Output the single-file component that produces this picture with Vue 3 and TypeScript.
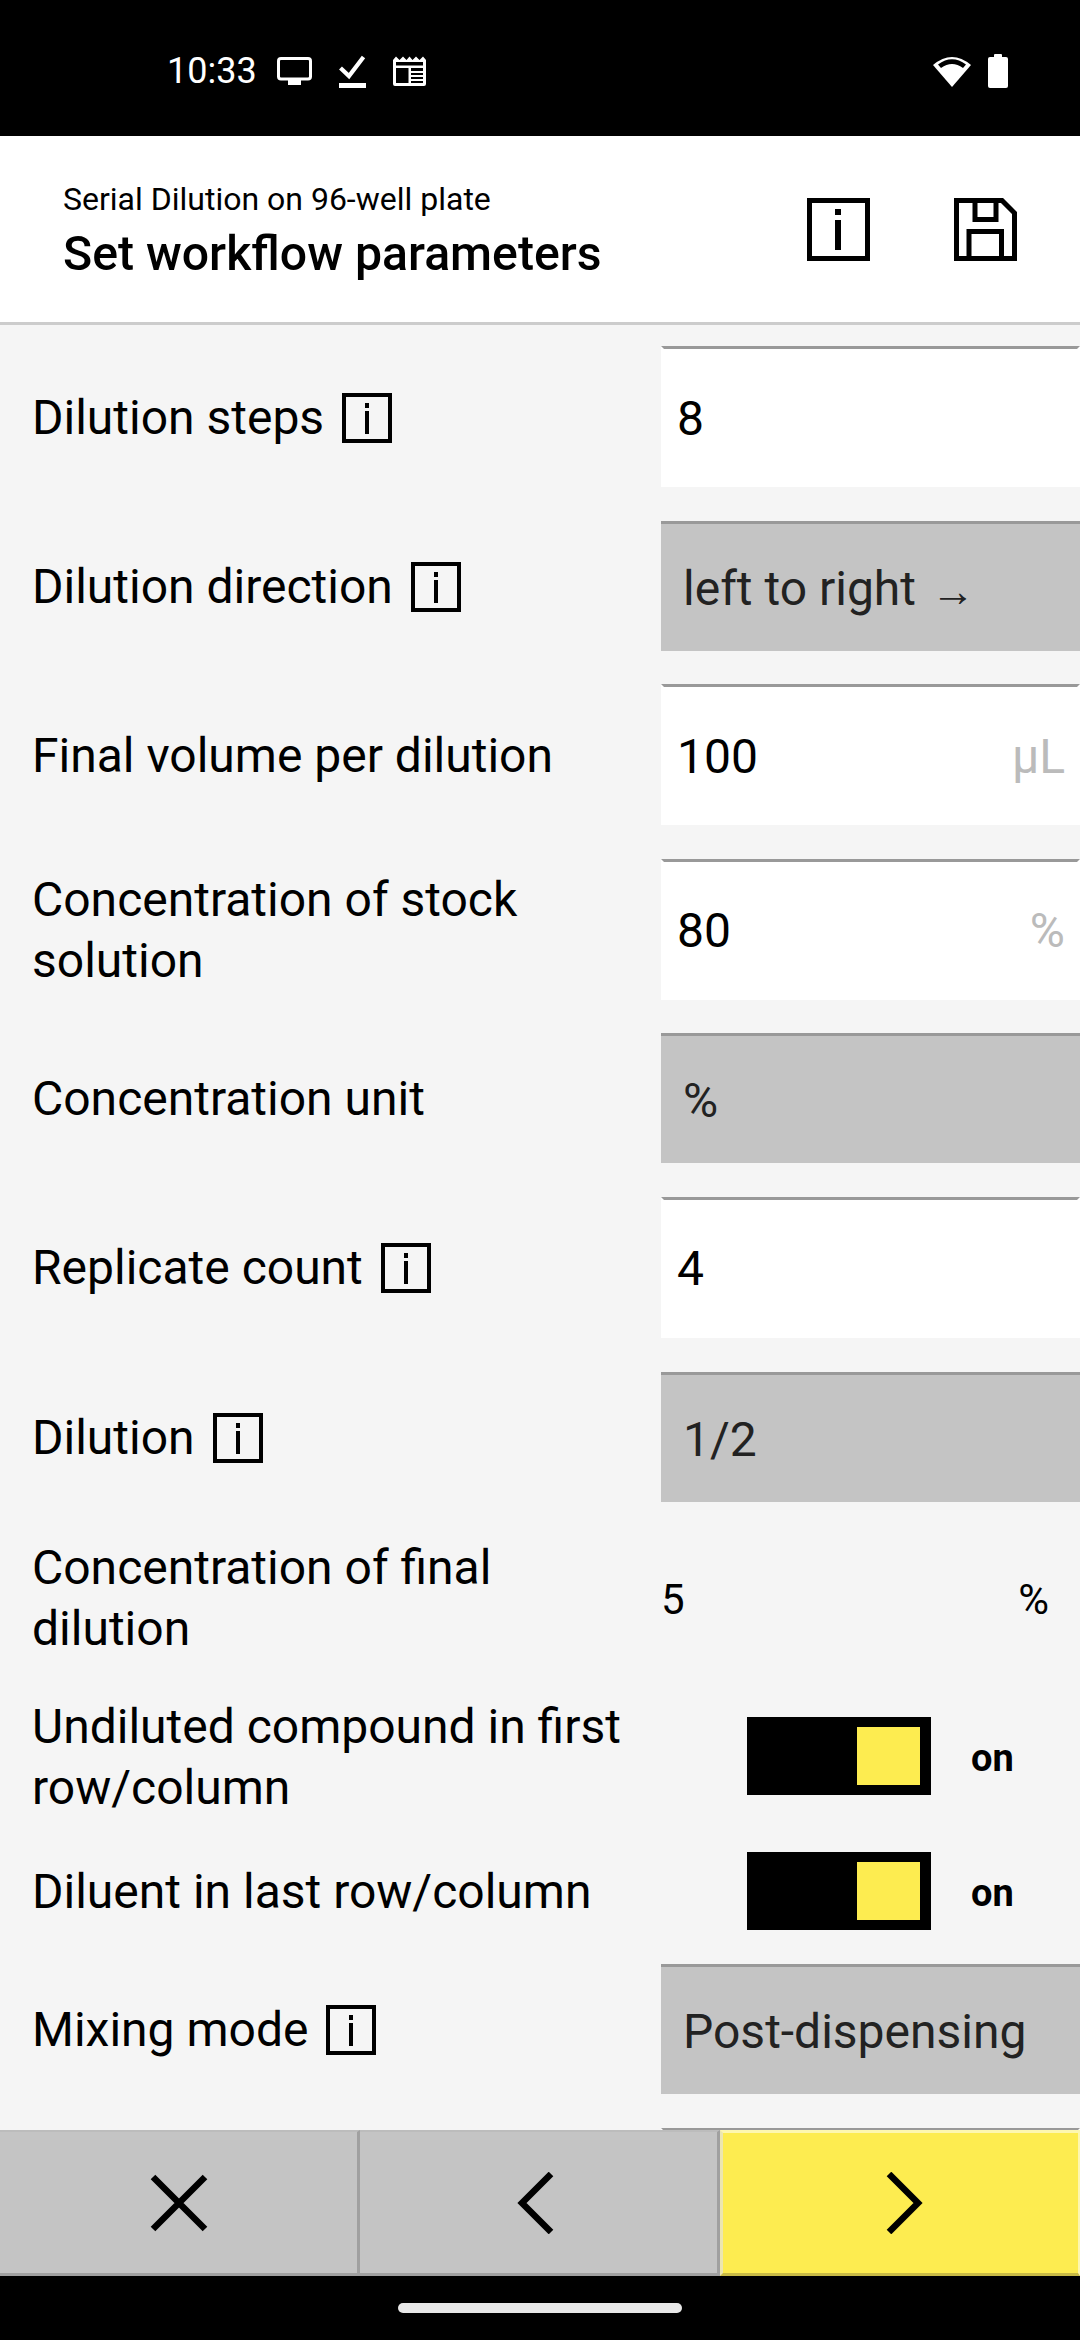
<script setup lang="ts">
type Row =
  | { kind: 'input'; label: string; info?: boolean; value: string; unit?: string }
  | { kind: 'select'; label: string; info?: boolean; value: string; arrow?: boolean }
  | { kind: 'text'; label: string; value: string; unit: string }
  | { kind: 'toggle'; label: string; tall?: boolean }

const rows: Row[] = [
  { kind: 'input', label: 'Dilution steps', info: true, value: '8' },
  { kind: 'select', label: 'Dilution direction', info: true, value: 'left to right', arrow: true },
  { kind: 'input', label: 'Final volume per dilution', value: '100', unit: 'µL' },
  { kind: 'input', label: 'Concentration of stock solution', value: '80', unit: '%' },
  { kind: 'select', label: 'Concentration unit', value: '%' },
  { kind: 'input', label: 'Replicate count', info: true, value: '4' },
  { kind: 'select', label: 'Dilution', info: true, value: '1/2' },
  { kind: 'text', label: 'Concentration of final dilution', value: '5', unit: '%' },
  { kind: 'toggle', label: 'Undiluted compound in first row/column', tall: true },
  { kind: 'toggle', label: 'Diluent in last row/column' },
  { kind: 'select', label: 'Mixing mode', info: true, value: 'Post-dispensing' },
  { kind: 'input', label: '', value: '' }
]

function isTall(row: Row): boolean {
  return row.kind === 'text' || (row.kind === 'toggle' && !!row.tall)
}
</script>

<template>
  <div class="screen">
    <div class="statusbar">
      <div class="status-left">
        <span class="time">10:33</span>
        <svg class="s-icon" width="35" height="28" viewBox="0 0 35 28">
          <rect x="1.5" y="1.5" width="32" height="20.5" rx="2.5" fill="none" stroke="#fff" stroke-width="3" />
          <rect x="11" y="23" width="13" height="5" fill="#fff" />
        </svg>
        <svg class="s-icon" width="27" height="33" viewBox="0 0 27 33">
          <path d="M1.5 13 L10 21 L24.5 2" fill="none" stroke="#fff" stroke-width="4.2" />
          <rect x="0" y="28" width="27" height="5" fill="#fff" />
        </svg>
        <svg class="s-icon" width="33" height="30" viewBox="0 0 33 30">
          <path d="M0 4 L3 0.5 L6.5 4 L10 0.5 L13.5 4 L16.5 0.5 L19.5 4 L23 0.5 L26.5 4 L30 0.5 L33 4 V28 Q33 30 31 30 H2 Q0 30 0 28 Z" fill="#fff" />
          <rect x="3" y="6" width="27" height="3.5" fill="#000" />
          <rect x="3" y="12" width="12.5" height="15" fill="#000" />
          <rect x="18" y="12" width="12" height="15" fill="#000" />
          <path d="M18 16 H30 M18 20 H30 M18 24 H30" stroke="#fff" stroke-width="2" />
        </svg>
      </div>
      <div class="status-right">
        <svg class="wifi" width="40" height="34" viewBox="0 0 40 34">
          <path d="M20 33 L1 11 Q20 -5 39 11 Z" fill="#fff" />
          <path d="M6 10.5 Q20 0 34 10.5 L31 14 Q20 6 9 14 Z" fill="#000" />
        </svg>
        <svg class="batt" width="20" height="34" viewBox="0 0 20 34">
          <rect x="6" y="0" width="8" height="4" rx="1" fill="#fff" />
          <rect x="0" y="3" width="20" height="31" rx="2" fill="#fff" />
        </svg>
      </div>
    </div>

    <header class="header">
      <div class="titles">
        <div class="subtitle">Serial Dilution on 96-well plate</div>
        <div class="title">Set workflow parameters</div>
      </div>
      <div class="actions">
        <svg width="63" height="63" viewBox="0 0 63 63">
          <rect x="2.5" y="2.5" width="58" height="58" fill="none" stroke="#000" stroke-width="5" />
          <rect x="28" y="11" width="6" height="6" fill="#000" />
          <rect x="28" y="22" width="6" height="30" fill="#000" />
        </svg>
        <svg width="63" height="63" viewBox="0 0 63 63">
          <path d="M2.5 2.5 H48 L60.5 15 V60.5 H2.5 Z" fill="none" stroke="#000" stroke-width="5" />
          <path d="M21 4 V21.5 H42 V4" fill="none" stroke="#000" stroke-width="5" />
          <path d="M15 60 V33.5 H47.5 V60" fill="none" stroke="#000" stroke-width="5" />
        </svg>
      </div>
    </header>

    <main class="content">
      <div v-for="(row, i) in rows" :key="i" class="row" :class="{ tall: isTall(row) }">
        <div class="label">
          <span>{{ row.label }}</span>
          <svg v-if="'info' in row && row.info" class="info" width="50" height="50" viewBox="0 0 50 50">
            <rect x="2" y="2" width="46" height="46" fill="none" stroke="#000" stroke-width="4" />
            <rect x="23" y="10" width="4" height="5" fill="#000" />
            <rect x="23" y="18" width="4" height="23" fill="#000" />
          </svg>
        </div>

        <div v-if="row.kind === 'input'" class="field input">
          <span class="value">{{ row.value }}</span>
          <span v-if="row.unit" class="unit">{{ row.unit }}</span>
        </div>
        <div v-else-if="row.kind === 'select'" class="field select">
          <span>{{ row.value }}</span>
          <span v-if="row.arrow" class="arrow">→</span>
        </div>
        <div v-else-if="row.kind === 'text'" class="plain">
          <span>{{ row.value }}</span>
          <span>{{ row.unit }}</span>
        </div>
        <div v-else class="toggle-wrap">
          <div class="toggle"><div class="knob"></div></div>
          <span class="on">on</span>
        </div>
      </div>
    </main>

    <footer class="bottombar">
      <button class="btn">
        <svg width="58" height="58" viewBox="0 0 58 58">
          <path d="M3 3 L55 55 M55 3 L3 55" fill="none" stroke="#000" stroke-width="6.5" />
        </svg>
      </button>
      <button class="btn">
        <svg class="chev-l" width="38" height="62" viewBox="0 0 38 62">
          <path d="M34 2 L5 31 L34 60" fill="none" stroke="#000" stroke-width="6.5" />
        </svg>
      </button>
      <button class="btn next">
        <svg class="chev-r" width="38" height="62" viewBox="0 0 38 62">
          <path d="M4 2 L33 31 L4 60" fill="none" stroke="#000" stroke-width="6.5" />
        </svg>
      </button>
    </footer>

    <div class="navbar"><div class="pill"></div></div>
  </div>
</template>

<style scoped>
.screen {
  position: relative;
  width: 1080px;
  height: 2340px;
  display: flex;
  flex-direction: column;
  overflow: hidden;
  background: #f5f5f5;
  font-family: Roboto, "Liberation Sans", sans-serif;
  color: #000;
}
.statusbar {
  height: 136px;
  flex: none;
  background: #000;
  display: flex;
  align-items: center;
  justify-content: space-between;
  padding: 6px 72px 0 167px;
  box-sizing: border-box;
}
.status-left,
.status-right {
  display: flex;
  align-items: center;
}
.time {
  font-size: 36px;
  color: #fff;
  margin-right: 20px;
}
.s-icon {
  margin-right: 27px;
}
.batt {
  margin-left: 16px;
}
.header {
  height: 189px;
  flex: none;
  box-sizing: border-box;
  background: #fff;
  border-bottom: 3px solid #ccc;
  display: flex;
  align-items: center;
  justify-content: space-between;
  padding: 0 63px 0 63px;
}
.titles {
  padding-top: 3px;
}
.subtitle {
  font-size: 32px;
  line-height: 44px;
}
.title {
  font-size: 48.2px;
  font-weight: 500;
  line-height: 60px;
  padding-top: 3px;
}
.actions {
  display: flex;
  gap: 84px;
}
.content {
  flex: 1;
  min-height: 0;
  overflow: hidden;
  padding-top: 21px;
  display: flex;
  flex-direction: column;
  gap: 33.6px;
}
.row {
  flex: none;
  display: grid;
  grid-template-columns: 661px 419px;
  align-items: center;
  min-height: 78px;
}
.row.tall {
  min-height: 125px;
}
.label {
  padding: 1px 28px 0 32px;
  font-size: 48px;
  line-height: 61px;
}
.info {
  vertical-align: -9px;
  margin-left: 18px;
}
.field {
  box-sizing: border-box;
  display: flex;
  align-items: center;
  border-top: 3px solid #999;
  font-size: 48px;
}
.input {
  height: 141px;
  background: #fff;
  border-left: 3px solid #fff;
  border-right: 3px solid #fff;
  justify-content: space-between;
  padding: 0 12px 0 13px;
}
.unit {
  color: #bbb;
}
.select {
  height: 130px;
  background: #c4c4c4;
  color: #222;
  padding: 2px 22px 0;
}
.arrow {
  font-size: 44px;
  margin-left: 15px;
  margin-top: 6px;
}
.plain {
  display: flex;
  justify-content: space-between;
  font-size: 42px;
  padding: 3px 31px 0 0;
}
.toggle-wrap {
  display: flex;
  align-items: center;
  padding-left: 86px;
}
.toggle {
  box-sizing: border-box;
  width: 184px;
  height: 78px;
  background: #000;
  display: flex;
  justify-content: flex-end;
  align-items: center;
  padding-right: 11px;
}
.knob {
  width: 63px;
  height: 58px;
  background: #fdec50;
}
.on {
  font-size: 38px;
  font-weight: 700;
  margin-left: 40px;
  padding-top: 3px;
}
.bottombar {
  position: absolute;
  left: 0;
  right: 0;
  top: 2130px;
  height: 146px;
  display: grid;
  grid-template-columns: 1fr 1fr 1fr;
}
.btn {
  box-sizing: border-box;
  margin: 0;
  padding: 0;
  background: #c4c4c4;
  border: 0;
  border-top: 2px solid #bcbcbc;
  border-right: 3px solid #a0a0a0;
  border-bottom: 3px solid #a0a0a0;
  display: flex;
  align-items: center;
  justify-content: center;
}
.chev-l {
  margin-right: 5px;
}
.chev-r {
  margin-left: 6px;
}
.btn.next {
  background: #fdec50;
  border-left: 3px solid #ece6b0;
  border-top: 3px solid #fdf7b0;
  border-right: 2px solid #fdf7b0;
  border-bottom-color: #c9bb45;
}
.navbar {
  position: absolute;
  left: 0;
  right: 0;
  top: 2276px;
  height: 64px;
  background: #000;
  display: flex;
  justify-content: center;
}
.pill {
  margin-top: 27px;
  width: 284px;
  height: 10px;
  border-radius: 5px;
  background: #e8e8e8;
}
</style>
